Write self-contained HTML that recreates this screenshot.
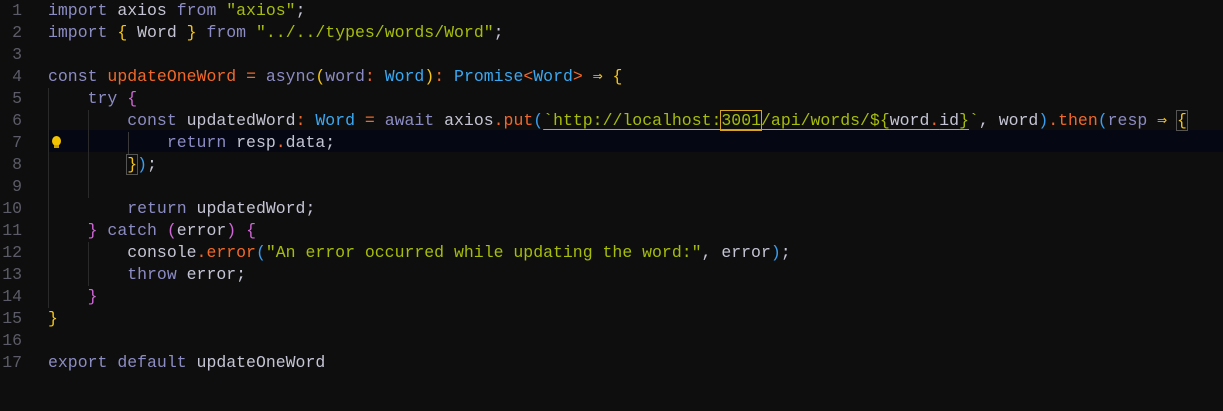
<!DOCTYPE html><html><head><style>
body{margin:0;background:#0e0e0e;width:1223px;height:411px;overflow:hidden;font-family:"Liberation Mono",monospace;font-size:16.5px;}
.l{position:absolute;left:0;height:22px;line-height:22px;white-space:pre;width:1223px}
.n{position:absolute;left:0;width:22px;text-align:right;color:#5c5c68}
.c{position:absolute;left:48px;color:#c4c4d4}
.k{color:#8c8cc4}.s{color:#a6bd0a}.f{color:#f0692a}.t{color:#3aa9f2}.o{color:#f0692a}
.y{color:#f5c518}.p{color:#d066d6}.b{color:#3a9ef0}.v{color:#8c8cc4}
.g{position:absolute;width:1px;background:#2a2a2a}
</style></head><body>
<div style="position:absolute;left:48px;top:130px;width:1175px;height:22px;background:#050812"></div>
<div class="g" style="left:48px;top:88px;height:220px"></div>
<div class="g" style="left:88px;top:110px;height:88px"></div>
<div class="g" style="left:88px;top:242px;height:44px"></div>
<div class="g" style="left:128px;top:132px;height:22px;background:#3a3a3a"></div>
<div class="l" style="top:0"><span class="n">1</span><span class="c"><span class="k">import</span> axios <span class="k">from</span> <span class="s">"axios"</span>;</span></div>
<div class="l" style="top:22px"><span class="n">2</span><span class="c"><span class="k">import</span> <span class="y">{</span> Word <span class="y">}</span> <span class="k">from</span> <span class="s">"../../types/words/Word"</span>;</span></div>
<div class="l" style="top:44px"><span class="n">3</span></div>
<div class="l" style="top:66px"><span class="n">4</span><span class="c"><span class="k">const</span> <span class="f">updateOneWord</span> <span class="o">=</span> <span class="k">async</span><span class="y">(</span><span class="v">word</span><span class="o">:</span> <span class="t">Word</span><span class="y">)</span><span class="o">:</span> <span class="t">Promise</span><span class="o">&lt;</span><span class="t">Word</span><span class="o">&gt;</span> <span class="y">⇒ {</span></span></div>
<div class="l" style="top:88px"><span class="n">5</span><span class="c">    <span class="k">try</span> <span class="p">{</span></span></div>
<div class="l" style="top:110px"><span class="n">6</span><span class="c">        <span class="k">const</span> updatedWord<span class="o">:</span> <span class="t">Word</span> <span class="o">=</span> <span class="k">await</span> axios<span class="o">.</span><span class="f">put</span><span class="b">(</span><span class="s" style="text-decoration:underline;text-underline-offset:4px">`http://localhost:<span style="outline:1px solid #d9a520">3001</span>/api/words/${<span style="color:#c4c4d4">word<span class="o">.</span>id</span>}</span><span class="s">`</span>, word<span class="b">)</span><span class="o">.</span><span class="f">then</span><span class="b">(</span><span class="v">resp</span> <span class="y">⇒</span> <span class="y" style="outline:1px solid #555">{</span></span></div>
<div class="l" style="top:132px"><span class="n">7</span><span style="position:absolute;left:52px;top:4px;width:9px;height:10px;border-radius:50%;background:#f2c200"></span><span style="position:absolute;left:54px;top:13px;width:5px;height:3px;background:#c9a000"></span><span class="c">            <span class="k">return</span> resp<span class="o">.</span>data;</span></div>
<div class="l" style="top:154px"><span class="n">8</span><span class="c">        <span class="y" style="outline:1px solid #555">}</span><span class="b">)</span>;</span></div>
<div class="l" style="top:176px"><span class="n">9</span></div>
<div class="l" style="top:198px"><span class="n">10</span><span class="c">        <span class="k">return</span> updatedWord;</span></div>
<div class="l" style="top:220px"><span class="n">11</span><span class="c">    <span class="p">}</span> <span class="k">catch</span> <span class="p">(</span>error<span class="p">)</span> <span class="p">{</span></span></div>
<div class="l" style="top:242px"><span class="n">12</span><span class="c">        console<span class="o">.</span><span class="f">error</span><span class="b">(</span><span class="s">"An error occurred while updating the word:"</span>, error<span class="b">)</span>;</span></div>
<div class="l" style="top:264px"><span class="n">13</span><span class="c">        <span class="k">throw</span> error;</span></div>
<div class="l" style="top:286px"><span class="n">14</span><span class="c">    <span class="p">}</span></span></div>
<div class="l" style="top:308px"><span class="n">15</span><span class="c"><span class="y">}</span></span></div>
<div class="l" style="top:330px"><span class="n">16</span></div>
<div class="l" style="top:352px"><span class="n">17</span><span class="c"><span class="k">export</span> <span class="k">default</span> updateOneWord</span></div>
</body></html>
